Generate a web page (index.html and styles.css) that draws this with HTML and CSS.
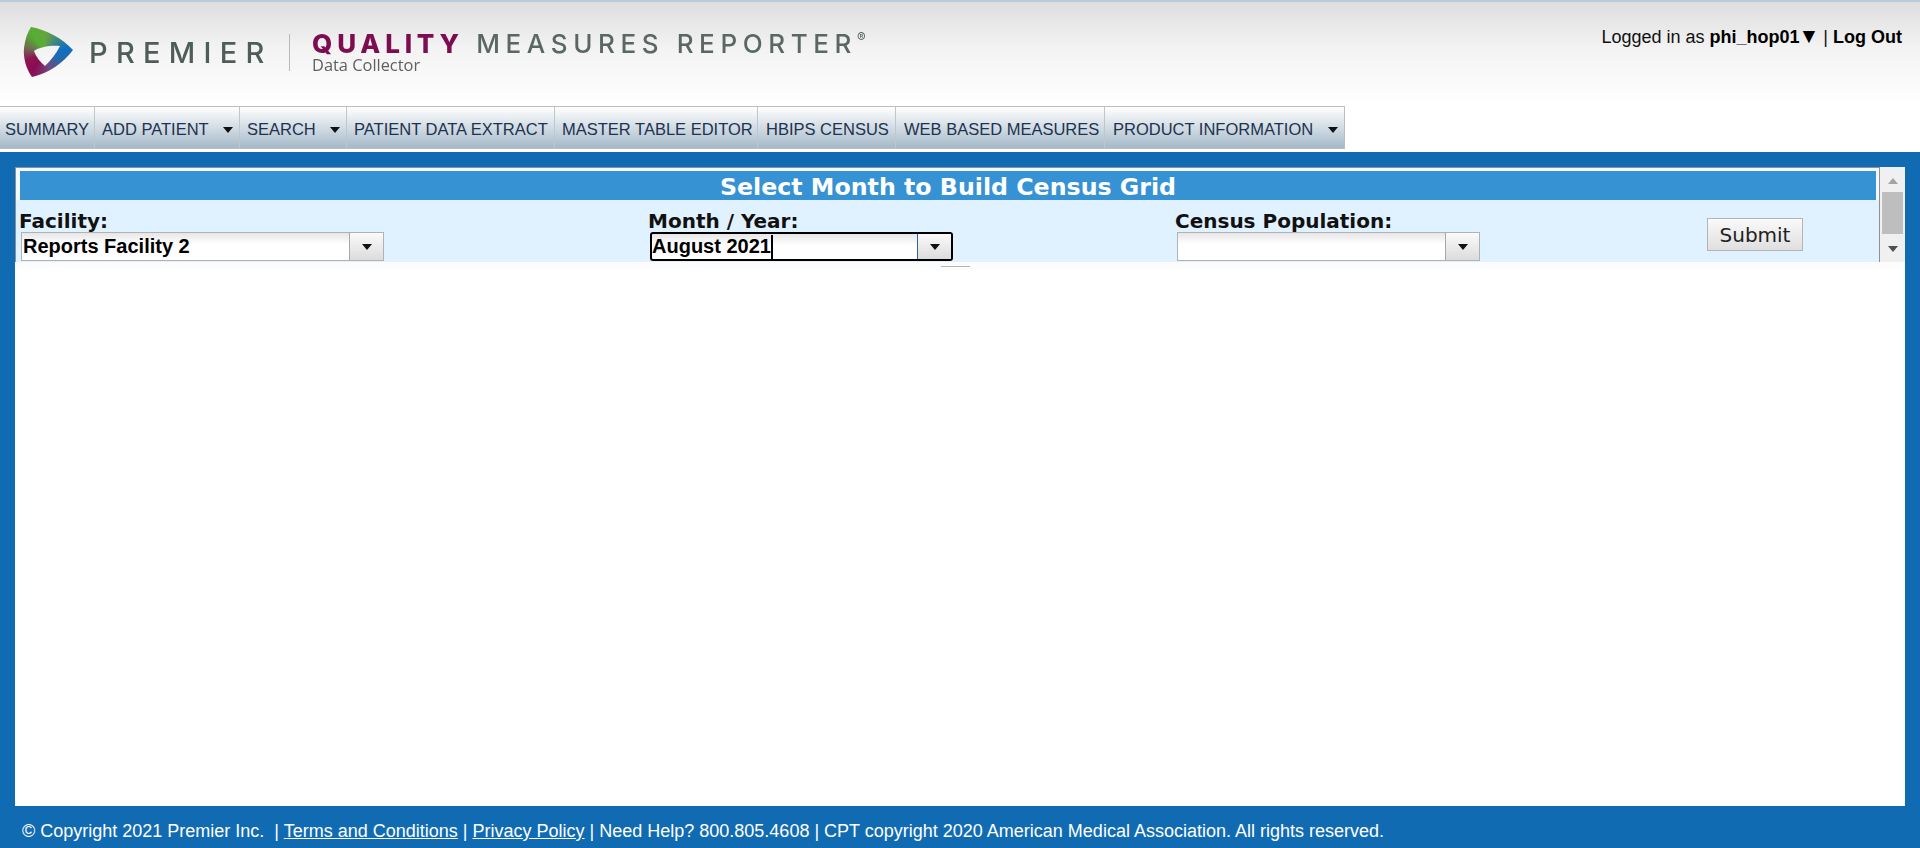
FILE: index.html
```html
<!DOCTYPE html>
<html lang="en">
<head>
    <meta charset="UTF-8">
    <meta name="viewport" content="width=device-width, initial-scale=1.0">
    <title>Quality Measures Reporter</title>
    <link rel="stylesheet" href="styles.css">
</head>
<body>
    <header class="header">
        <div class="logo">
            <div class="logo-mark"></div>
            <span class="logo-premier">PREMIER</span>
            <span class="logo-divider"></span>
            <div class="logo-product">
                <div class="logo-title"><span class="logo-quality">QUALITY</span> MEASURES REPORTER<sup class="logo-reg">®</sup></div>
                <div class="logo-sub">Data Collector</div>
            </div>
        </div>
        <div class="user">Logged in as <b>phi_hop01<span class="user-arrow">▼</span></b> | <b>Log Out</b></div>
    </header>

    <nav class="nav">
        <a class="nav-summary" href="#">SUMMARY</a>
        <a class="nav-add" href="#">ADD PATIENT<i class="nav-caret"></i></a>
        <a class="nav-search" href="#">SEARCH<i class="nav-caret"></i></a>
        <a class="nav-extract" href="#">PATIENT DATA EXTRACT</a>
        <a class="nav-master" href="#">MASTER TABLE EDITOR</a>
        <a class="nav-hbips" href="#">HBIPS CENSUS</a>
        <a class="nav-web" href="#">WEB BASED MEASURES</a>
        <a class="nav-product" href="#">PRODUCT INFORMATION<i class="nav-caret"></i></a>
    </nav>

    <main class="main">
        <div class="content">
            <section class="panel">
                <div class="panel-body">
                    <h1 class="panel-title">Select Month to Build Census Grid</h1>
                    <form class="filters">
                        <div class="field">
                            <label>Facility:</label>
                            <div class="combo combo-wide">
                                <span class="combo-text">Reports Facility 2</span>
                                <span class="combo-btn"><i></i></span>
                            </div>
                        </div>
                        <div class="field">
                            <label>Month / Year:</label>
                            <div class="combo combo-focus">
                                <span class="combo-text">August 2021<i class="caret"></i></span>
                                <span class="combo-btn"><i></i></span>
                            </div>
                        </div>
                        <div class="field">
                            <label>Census Population:</label>
                            <div class="combo">
                                <span class="combo-text"></span>
                                <span class="combo-btn"><i></i></span>
                            </div>
                        </div>
                        <button class="submit" type="button">Submit</button>
                    </form>
                </div>
                <div class="scrollbar">
                    <i class="scroll-up"></i>
                    <i class="scroll-thumb"></i>
                    <i class="scroll-down"></i>
                </div>
            </section>
            <div class="grid-area">
                <div class="popup-edge"></div>
            </div>
        </div>
    </main>

    <footer class="footer">
        © Copyright 2021 Premier Inc. &nbsp;| <a href="#">Terms and Conditions</a> | <a href="#">Privacy Policy</a> | Need Help? 800.805.4608 | CPT copyright 2020 American Medical Association. All rights reserved.
    </footer>
</body>
</html>
```

FILE: styles.css
```css
html, body { margin: 0; height: 100%; }
body { display: flex; flex-direction: column; height: 848px; overflow: hidden; font-family: "Liberation Sans", Arial, sans-serif; background: #fff; }

/* header */
.header { height: 104px; flex: none; display: flex; justify-content: space-between; border-top: 2px solid #bccbdb; background: linear-gradient(#dedede, #f3f3f3 45%, #fff 100%); }
.logo { position: relative; flex: none; width: 880px; filter: blur(0.35px); }
.logo-mark { position: absolute; left: 23px; top: 25px; width: 52px; height: 52px; background: conic-gradient(from 0deg at 42% 50%, #62a83a 0deg, #4f8f6a 30deg, #0f6fc0 80deg, #2a66a8 115deg, #6d4a80 165deg, #8c0b52 215deg, #8c1552 250deg, #6f6a50 285deg, #56ad34 325deg, #62a83a 360deg); clip-path: path(evenodd, "M8 0 C24 3 39 11 50 23 C40 36 26 46 9 50 C3 42 0 30 1 21 C2 13 4 6 8 0 Z M11 24 C16 20 28 18 37 19 C33 27 28 33 22 39 C17 35 13 30 11 24 Z"); }
.logo-premier { position: absolute; left: 89px; top: 31px; font-family: "Inter", sans-serif; font-size: 29px; font-weight: 500; line-height: 40px; letter-spacing: 8.3px; color: #4f5d59; }
.logo-divider { position: absolute; left: 289px; top: 32px; width: 1px; height: 37px; background: #b9b9b9; }
.logo-product { position: absolute; left: 312px; top: 25px; white-space: nowrap; }
.logo-title { font-family: "Inter", sans-serif; font-size: 26px; font-weight: 500; line-height: 34px; letter-spacing: 5.6px; color: #5a6763; }
.logo-quality { font-weight: 800; color: #7c0d50; letter-spacing: 4.8px; margin-right: 0; }
.logo-reg { font-size: 13px; line-height: 0; letter-spacing: 0; vertical-align: 11px; margin-left: 0; }
.logo-sub { font-family: "Open Sans", sans-serif; font-size: 16.4px; line-height: 14px; margin-top: -3px; color: #606060; }
.user { padding: 25px 18px 0 0; font-size: 18px; line-height: 20px; color: #111; white-space: nowrap; }
.user b { color: #000; }
.user-arrow { margin: 0 -1px 0 -1px; font-size: 21px; font-weight: normal; line-height: 0; }

/* nav */
.nav { flex: none; display: flex; width: 1344px; height: 41px; margin-bottom: 3px; border: solid #bdbdbd; border-width: 1px 1px 1px 0; box-sizing: content-box; background: linear-gradient(#fff, #a5b9c9); }
.nav a { box-sizing: border-box; display: flex; align-items: center; justify-content: space-between; padding: 4px 5px 0 7px; border-right: 1px solid #bfc7cd; font-size: 16.5px; color: #21324f; text-decoration: none; white-space: nowrap; }
.nav a:last-child { border-right: 0; }
.nav-caret { width: 0; height: 0; margin-right: 1px; border: 5.5px solid transparent; border-top: 6px solid #111; border-bottom: 0; }
.nav-summary { width: 95px; padding-left: 5px !important; }
.nav-add { width: 145px; }
.nav-search { width: 107px; }
.nav-extract { width: 208px; }
.nav-master { width: 203px; }
.nav-hbips { width: 138px; padding-left: 8px !important; }
.nav-web { width: 209px; padding-left: 8px !important; }
.nav-product { width: 239px; padding-left: 8px !important; }

/* main */
.main { flex: 1; min-height: 0; display: flex; padding: 15px 15px 0; background: #116bb3; }
.content { flex: 1; display: flex; flex-direction: column; background: #fff; }
.panel { flex: none; display: flex; height: 95px; }
.panel-body { flex: 1; min-width: 0; display: flex; flex-direction: column; box-sizing: border-box; border-top: 1px solid #8b9199; border-left: 1px solid #8b9199; border-right: 1px solid #8b9199; background: #f2f8fc; }
.panel-title { flex: none; box-sizing: border-box; height: 29px; margin: 3px 3px 0 4px; background: #3692d3; color: #fff; font-family: "DejaVu Sans", Verdana, sans-serif; font-size: 23.7px; line-height: 33px; font-weight: bold; text-align: center; }
.filters { flex: 1; display: grid; grid-template-columns: 629px 527px 531px auto; padding-left: 4px; background: #e0f2ff; font-family: "DejaVu Sans", Verdana, sans-serif; }
.field { display: flex; flex-direction: column; }
.field label { height: 32px; margin-left: -1px; padding-top: 10px; box-sizing: border-box; font-size: 20px; line-height: 22px; font-weight: bold; color: #111; white-space: nowrap; }
.combo { box-sizing: border-box; display: flex; width: 303px; height: 29px; margin-left: 1px; border: 1px solid #b2b2b2; background: linear-gradient(#e6e6e6, #fff 11px); }
.combo-wide { width: 363px; }
.combo-text { flex: 1; padding-left: 1px; font-family: "Liberation Sans", Arial, sans-serif; font-size: 20px; font-weight: bold; line-height: 27px; color: #000; white-space: nowrap; }
.combo-btn { flex: none; width: 33px; display: flex; align-items: center; justify-content: center; border-left: 1px solid #a8a8a8; background: linear-gradient(#fafafa, #dcdcdc); }
.combo-btn i { width: 0; height: 0; border: 5.5px solid transparent; border-top: 6px solid #111; border-bottom: 0; }
.combo-focus { border: 2px solid #000; border-radius: 3px; }
.combo-focus .combo-text { padding-left: 0; line-height: 25px; }
.combo-focus .combo-btn { width: 33px; border-left-color: #2b62ad; }
.caret { display: inline-block; width: 2px; height: 24px; margin-left: 0; vertical-align: -6px; background: #000; }
.submit { align-self: start; box-sizing: border-box; width: 96px; height: 33px; margin: 18px 0 0 0; padding: 0; border: 1px solid #b4b4b4; background: linear-gradient(#fafafa, #dfdfdf); color: #222; font-family: "DejaVu Sans", Verdana, sans-serif; font-size: 20px; }

/* scrollbar on the top frame */
.scrollbar { flex: none; width: 25px; display: flex; flex-direction: column; align-items: center; background: #f0f0f0; }
.scroll-up { width: 0; height: 0; margin-top: 11px; border: 5.5px solid transparent; border-bottom: 6px solid #a3a3a3; border-top: 0; }
.scroll-thumb { width: 21px; height: 42px; margin-top: 8px; background: #bebebe; }
.scroll-down { width: 0; height: 0; margin-top: 12px; border: 5.5px solid transparent; border-top: 6px solid #505050; border-bottom: 0; }

.grid-area { flex: 1; background: linear-gradient(#fcfcfc 8px, #fff 8px); }
.popup-edge { width: 29px; height: 1px; margin: 4px 0 0 926px; background: #b5b5b5; }

/* footer */
.footer { flex: none; height: 42px; box-sizing: border-box; padding: 15px 0 0 22px; background: #116bb3; color: #fff; font-size: 18px; line-height: 20px; white-space: nowrap; }
.footer a { color: #fff; }
```
